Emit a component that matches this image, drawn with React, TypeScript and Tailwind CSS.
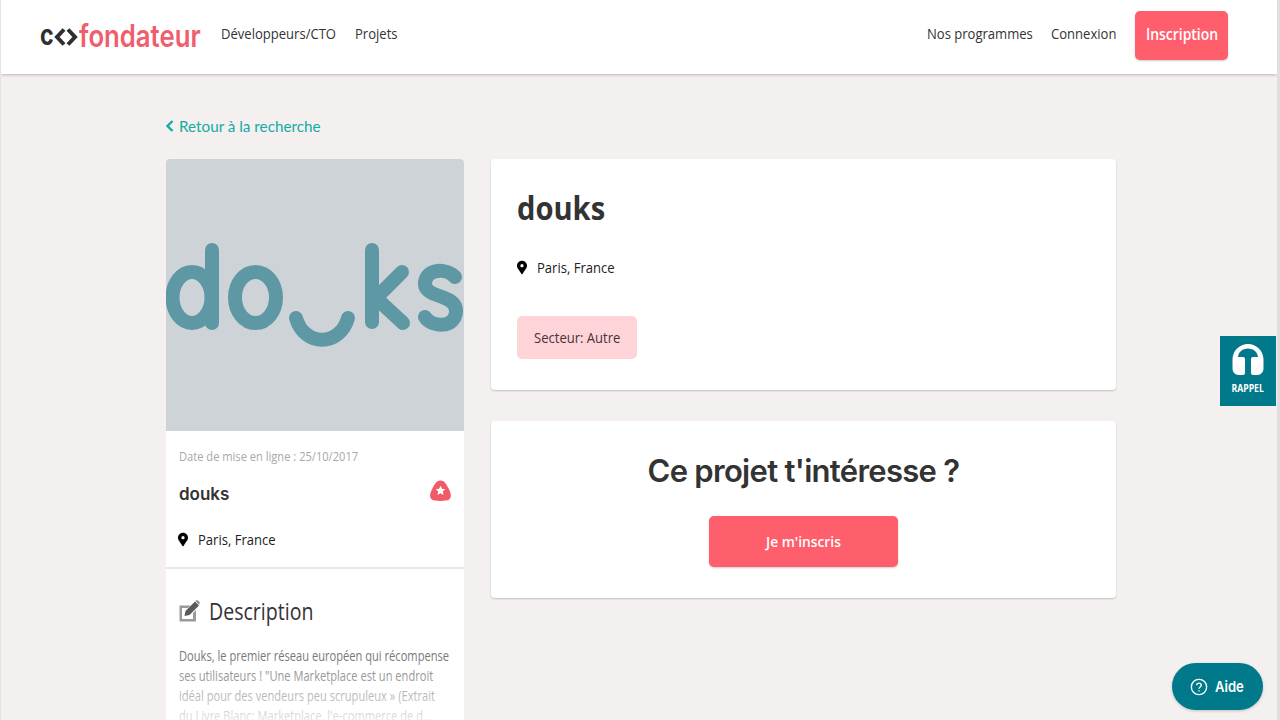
import React from "react";

const sans = "font-['Open_Sans',sans-serif]";
const squeeze = "inline-block origin-left scale-x-[.87] whitespace-nowrap";

function Pin({ className = "" }: { className?: string }) {
  return (
    <svg viewBox="0 0 384 512" className={className} fill="currentColor">
      <path fillRule="evenodd" d="M172 502C27 291 0 265 0 192 0 86 86 0 192 0s192 86 192 192c0 73-27 99-172 310a24 24 0 0 1-40 0zM192 250a62 62 0 1 0 0-124 62 62 0 0 0 0 124z" />
    </svg>
  );
}

function DouksLogo() {
  return (
    <svg viewBox="166 159 298 272" className="w-full h-full" fill="none" stroke="#5f98a5" strokeWidth="14" strokeLinecap="round" strokeLinejoin="round">
      <ellipse cx="192" cy="297.500" rx="19.500" ry="25.500" />
      <path d="M212 250V323" />
      <ellipse cx="255.500" cy="297.500" rx="20.500" ry="25.500" />
      <path d="M296 318C304 347 340 347 348 318" />
      <path d="M372 250V322M402 272 376 298 403 323" />
      <path d="M455 277C447 268 426 268 425 283C424 299 457 293 456 312C455 328 432 328 425 317" />
    </svg>
  );
}

export default function App() {
  return (
    <div className={`h-screen w-full overflow-hidden relative bg-[#f4f0ef] border-l border-r-[3px] border-l-[#e4e4e4] border-r-[#e0dede] ${sans}`}>
      <header className="h-[74px] bg-white shadow-[0_1px_3px_rgba(0,0,0,0.25)] flex items-center pl-[39px] pr-[49px] relative">
        <div className="flex items-center w-[161px] h-[30px] mb-[2px] leading-none">
          <span className="font-['Inter',sans-serif] text-[29px] font-bold text-[#2f2f2f] w-[14px] -mt-[3px] inline-block origin-left scale-x-[.8]">c</span>
          <svg viewBox="0 0 24 18" className="w-[24px] h-[18px] mt-[2px] mr-[1px]" fill="none" stroke="#2f2f2f" strokeWidth="4">
            <path d="M10 1.500 3 9l7 7.500M14 1.500 21 9l-7 7.500" />
          </svg>
          <span className="font-['Inter',sans-serif] text-[31px] font-semibold text-[#f05d6c] w-[121px] -mt-[1px] inline-block origin-left scale-x-[.83] whitespace-nowrap">fondateur</span>
        </div>
        <nav className="flex items-center gap-[17px] ml-[20px] mb-[7px] text-[15px] text-[#333]">
          <span className={`${squeeze} w-[117px]`}>Développeurs/CTO</span>
          <span className={`${squeeze} w-[43px]`}>Projets</span>
        </nav>
        <div className="ml-auto flex items-center text-[15px] text-[#333]">
          <span className={`${squeeze} w-[107px] mb-[7px]`}>Nos programmes</span>
          <span className={`${squeeze} w-[67px] ml-[17px] mb-[7px]`}>Connexion</span>
          <button className="ml-[17px] mb-[3px] w-[93px] h-[49px] rounded-[5px] bg-[#ff5e6c] text-white text-[16px] font-semibold shadow-[0_1px_2px_rgba(0,0,0,0.2)] flex items-center pl-[11px] pb-[3px]">
            <span className={`${squeeze} w-[72px]`}>Inscription</span>
          </button>
        </div>
      </header>

      <main className="w-[950px] ml-[165px] pt-[41px]">
        <div className="flex items-center gap-[5px] h-[22px] font-['Lato',sans-serif] text-[15.250px] text-[#14aba4]">
          <svg viewBox="0 0 8 12" className="w-[8px] h-[12px]" fill="none" stroke="currentColor" strokeWidth="2.400"><path d="M6.500 1 1.500 6l5 5" /></svg>
          <span>Retour à la recherche</span>
        </div>

        <div className="flex items-start gap-[27px] mt-[22px]">
          <aside className="w-[298px] shrink-0 bg-white rounded-t-[4px] overflow-hidden">
            <div className="h-[272px] bg-[#cdd3d6]">
              <DouksLogo />
            </div>
            <div className="h-[138px] px-[13px] pt-[12px] border-b-2 border-[#e8e8e8]">
              <div className={`inline-block origin-left scale-x-[.855] whitespace-nowrap text-[13px] leading-[18px] text-[#a8a8a8]`}>Date de mise en ligne : 25/10/2017</div>
              <div className="flex justify-between mt-[12px]">
                <span className="font-['Inter',sans-serif] font-semibold text-[17px] leading-[26px] mt-[2px] text-[#333]">douks</span>
                <svg viewBox="0 0 24 24" className="w-[23px] h-[23px] -mr-[1px]">
                  <path d="M12 1.500C16 1.500 18 5 20.500 10 23 15 24 19 21 21.500 18.500 23.500 5.500 23.500 3 21.500 0 19 1 15 3.500 10 6 5 8 1.500 12 1.500Z" fill="#f25a68" />
                  <path d="M12 7l1.500 3.300 3.500.400-2.600 2.400.700 3.500-3.100-1.800-3.100 1.800.700-3.500-2.600-2.400 3.500-.400Z" fill="#fff" />
                </svg>
              </div>
              <div className="flex items-center gap-[10px] -ml-[1px] mt-[21px] text-[15px] leading-[22px] text-[#222]">
                <Pin className="w-[10px] h-[15px] text-black" />
                <span className={squeeze}>Paris, France</span>
              </div>
            </div>
            <div className="px-[13px] pt-[26px] h-[160px] relative">
              <div className="flex items-center gap-[9px] -ml-[1px]">
                <svg viewBox="0 0 22 22" className="w-[22px] h-[22px]">
                  <path d="M1.500 5.500h11L10 8H4v11h11v-6l3-3v11.500H1.500Z" fill="#9a9a9a" />
                  <path d="M6.500 16l1-5L17 1.500l4 4-9.500 9.500Z" fill="#5a5a5a" />
                  <path d="M18 .500q1-.500 2 0l1.500 1.500q.500 1 0 2l-.500.500-3.500-3.500Z" fill="#8a8a8a" />
                </svg>
                <h2 className="inline-block origin-left scale-x-[.85] whitespace-nowrap text-[23px] leading-[32px] text-[#333]">Description</h2>
              </div>
              <p className="mt-[19px] origin-left scale-x-[.794] whitespace-nowrap text-[14px] leading-[20px] text-[#777]">
                Douks, le premier réseau européen qui récompense<br />
                ses utilisateurs ! "Une Marketplace est un endroit<br />
                idéal pour des vendeurs peu scrupuleux » (Extrait<br />
                du Livre Blanc: Marketplace, l'e-commerce de d...
              </p>
              <div className="absolute left-0 right-0 bottom-0 h-[72px] bg-gradient-to-b from-white/0 to-white/90" />
            </div>
          </aside>

          <section className="w-[625px] flex flex-col gap-[31px]">
            <div className="h-[231px] bg-white rounded-[4px] shadow-[0_1px_2px_rgba(0,0,0,0.2)] px-[26px] pt-[27px]">
              <h1 className="text-[32px] leading-[44px] font-bold text-[#333] origin-left scale-x-[.91] whitespace-nowrap">douks</h1>
              <div className="flex items-center gap-[10px] mt-[26px] text-[15px] leading-[22px] text-[#222]">
                <Pin className="w-[10px] h-[15px] text-black" />
                <span className={squeeze}>Paris, France</span>
              </div>
              <div className="mt-[38px] flex items-center pl-[17px] w-[120px] h-[43px] rounded-[5px] bg-[#ffd4d8] text-[15px] text-[#4a3238]">
                <span className={squeeze}>Secteur: Autre</span>
              </div>
            </div>
            <div className="h-[177px] bg-white rounded-[4px] shadow-[0_1px_2px_rgba(0,0,0,0.2)] flex flex-col items-center pt-[27px]">
              <h2 className="font-['Inter',sans-serif] text-[31px] leading-[46px] font-semibold text-[#333] tracking-[-0.7px]">Ce projet t'intéresse ?</h2>
              <button className="mt-[22px] w-[189px] h-[51px] rounded-[5px] bg-[#ff5e6c] text-white text-[15px] font-semibold shadow-[0_1px_2px_rgba(0,0,0,0.2)] flex items-center pl-[57px]">
                <span className="inline-block origin-left scale-x-[.92] whitespace-nowrap w-[76px]">Je m'inscris</span>
              </button>
            </div>
          </section>
        </div>
      </main>

      <div className="absolute right-[1px] top-[336px] w-[56px] h-[70px] bg-[#00798a] flex flex-col items-center text-white pt-[7px]">
        <svg viewBox="0 0 32 32" className="w-[32px] h-[33px]" fill="#fff">
          <path d="M16 .500C7.500.500.500 7.500.500 16v9c0 3.500 2.500 6.500 6 6.500h4.500q2 0 2-2V15.500q0-2-2-2H6C6.500 8.500 10.500 5 16 5s9.500 3.500 10 8.500h-5q-2 0-2 2v14q0 2 2 2h4.500c3.500 0 6-3 6-6.500v-9C31.500 7.500 24.500.500 16 .500Z" />
        </svg>
        <span className="text-[10px] leading-[14px] font-bold mt-[5px] scale-x-[.87]">RAPPEL</span>
      </div>

      <div className="absolute left-[1171px] top-[663px] w-[91px] h-[47px] rounded-full bg-[#00798a] flex items-center pl-[18px] gap-[7px] text-white shadow-[0_1px_3px_rgba(0,0,0,0.2)]">
        <svg viewBox="0 0 20 20" className="w-[18px] h-[18px]" fill="none" stroke="#fff" strokeWidth="1.500">
          <circle cx="10" cy="10" r="8.500" />
          <path d="M7.500 8C7.500 5 12.500 5 12.500 8c0 2-2.500 2-2.500 4" />
          <path d="M10 13.500v1.500" />
        </svg>
        <span className="font-['Inter',sans-serif] text-[15px] font-semibold inline-block origin-left scale-x-[.87] pt-[1px]">Aide</span>
      </div>
    </div>
  );
}
